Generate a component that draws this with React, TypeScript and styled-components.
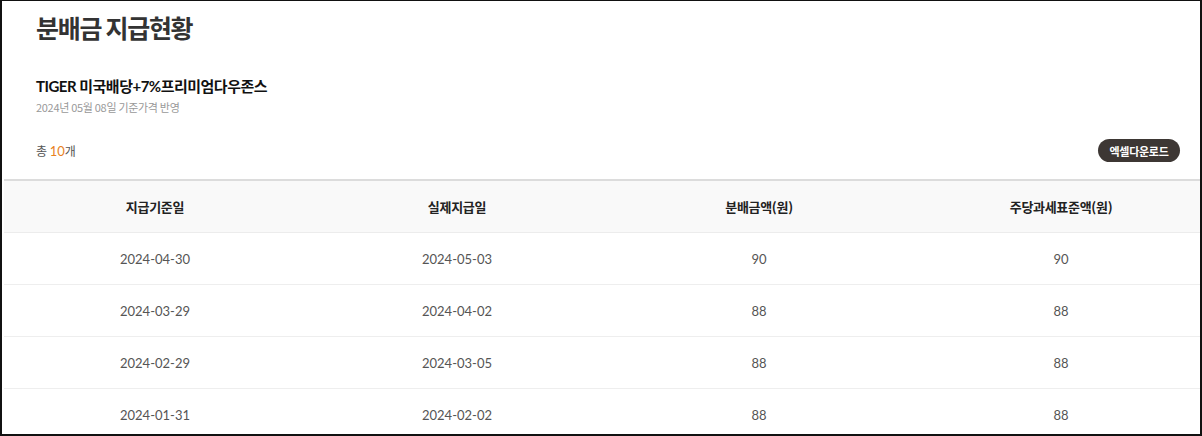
import React from 'react';
import styled, {createGlobalStyle} from 'styled-components';

const GlobalStyle = createGlobalStyle`
    html, body {
        margin: 0;
        padding: 0;
        background: #fff;
    }
    body {
        font-family: "Lato", "Noto Sans CJK KR", sans-serif;
    }
`

const Frame = styled.div`
    box-sizing: border-box;
    width: 1202px;
    height: 436px;
    border: 2px solid #111;
    border-top-width: 1px;
    border-bottom-width: 2px;
    overflow: hidden;
    background: #fff;
`

const Head = styled.div`
    padding: 9px 20px 0 34px;
`

const Title = styled.h2`
    margin: 0;
    font-family: "Noto Sans CJK KR", sans-serif;
    font-size: 25px;
    line-height: 34px;
    font-weight: 700;
    color: #333;
    letter-spacing: -1.3px;
`

const FundName = styled.div`
    margin-top: 32px;
    font-family: "Lato", "Noto Sans CJK KR", sans-serif;
    font-size: 15px;
    line-height: 20px;
    font-weight: 700;
    color: #111;
    letter-spacing: -0.5px;
`

const BaseDate = styled.div`
    margin-top: 3px;
    font-family: "Noto Sans CJK KR", sans-serif;
    font-size: 11px;
    line-height: 16px;
    color: #999;
    letter-spacing: -0.3px;
`

const CountRow = styled.div`
    display: flex;
    align-items: center;
    justify-content: space-between;
    height: 23px;
    margin-top: 24px;
    margin-bottom: 17px;
`

const Count = styled.div`
    font-family: "Noto Sans CJK KR", sans-serif;
    font-size: 12px;
    color: #555;
    em {
        font-style: normal;
        font-family: "Lato", sans-serif;
        font-size: 13px;
        color: #e8821e;
    }
`

const ExcelButton = styled.button`
    height: 23px;
    width: 82px;
    padding: 0;
    border: none;
    border-radius: 12px;
    background: #3d3734;
    color: #fff;
    font-family: "Noto Sans CJK KR", sans-serif;
    font-size: 11px;
    font-weight: 700;
    letter-spacing: -0.3px;
    cursor: pointer;
`

const TableWrap = styled.div`
    margin-left: 2px;
`

const Table = styled.table`
    width: 1208px;
    border-collapse: collapse;
    table-layout: fixed;
    border-top: 2px solid #dcdcdc;
`

const Th = styled.th`
    height: 51px;
    padding: 0;
    background: #f9f9f9;
    border-bottom: 1px solid #ececec;
    font-family: "Noto Sans CJK KR", sans-serif;
    font-size: 13px;
    font-weight: 700;
    color: #222;
    text-align: center;
    letter-spacing: -0.3px;
`

const Td = styled.td`
    height: 51px;
    padding: 0;
    border-bottom: 1px solid #eeeeee;
    font-family: "Lato", sans-serif;
    font-size: 13px;
    color: #555;
    text-align: center;
`

type Payout = {
    baseDate: string;
    payDate: string;
    amount: number;
    taxBase: number;
}

const rows: Payout[] = [
    {baseDate: '2024-04-30', payDate: '2024-05-03', amount: 90, taxBase: 90},
    {baseDate: '2024-03-29', payDate: '2024-04-02', amount: 88, taxBase: 88},
    {baseDate: '2024-02-29', payDate: '2024-03-05', amount: 88, taxBase: 88},
    {baseDate: '2024-01-31', payDate: '2024-02-02', amount: 88, taxBase: 88},
]

export default function App() {
    return (
        <>
            <GlobalStyle />
            <Frame>
                <Head>
                    <Title>분배금 지급현황</Title>
                    <FundName>TIGER 미국배당+7%프리미엄다우존스</FundName>
                    <BaseDate>2024년 05월 08일 기준가격 반영</BaseDate>
                    <CountRow>
                        <Count>총 <em>10</em>개</Count>
                        <ExcelButton>엑셀다운로드</ExcelButton>
                    </CountRow>
                </Head>
                <TableWrap>
                    <Table>
                        <thead>
                            <tr>
                                <Th>지급기준일</Th>
                                <Th>실제지급일</Th>
                                <Th>분배금액(원)</Th>
                                <Th>주당과세표준액(원)</Th>
                            </tr>
                        </thead>
                        <tbody>
                            {rows.map(r => (
                                <tr key={r.baseDate}>
                                    <Td>{r.baseDate}</Td>
                                    <Td>{r.payDate}</Td>
                                    <Td>{r.amount}</Td>
                                    <Td>{r.taxBase}</Td>
                                </tr>
                            ))}
                        </tbody>
                    </Table>
                </TableWrap>
            </Frame>
        </>
    );
}
